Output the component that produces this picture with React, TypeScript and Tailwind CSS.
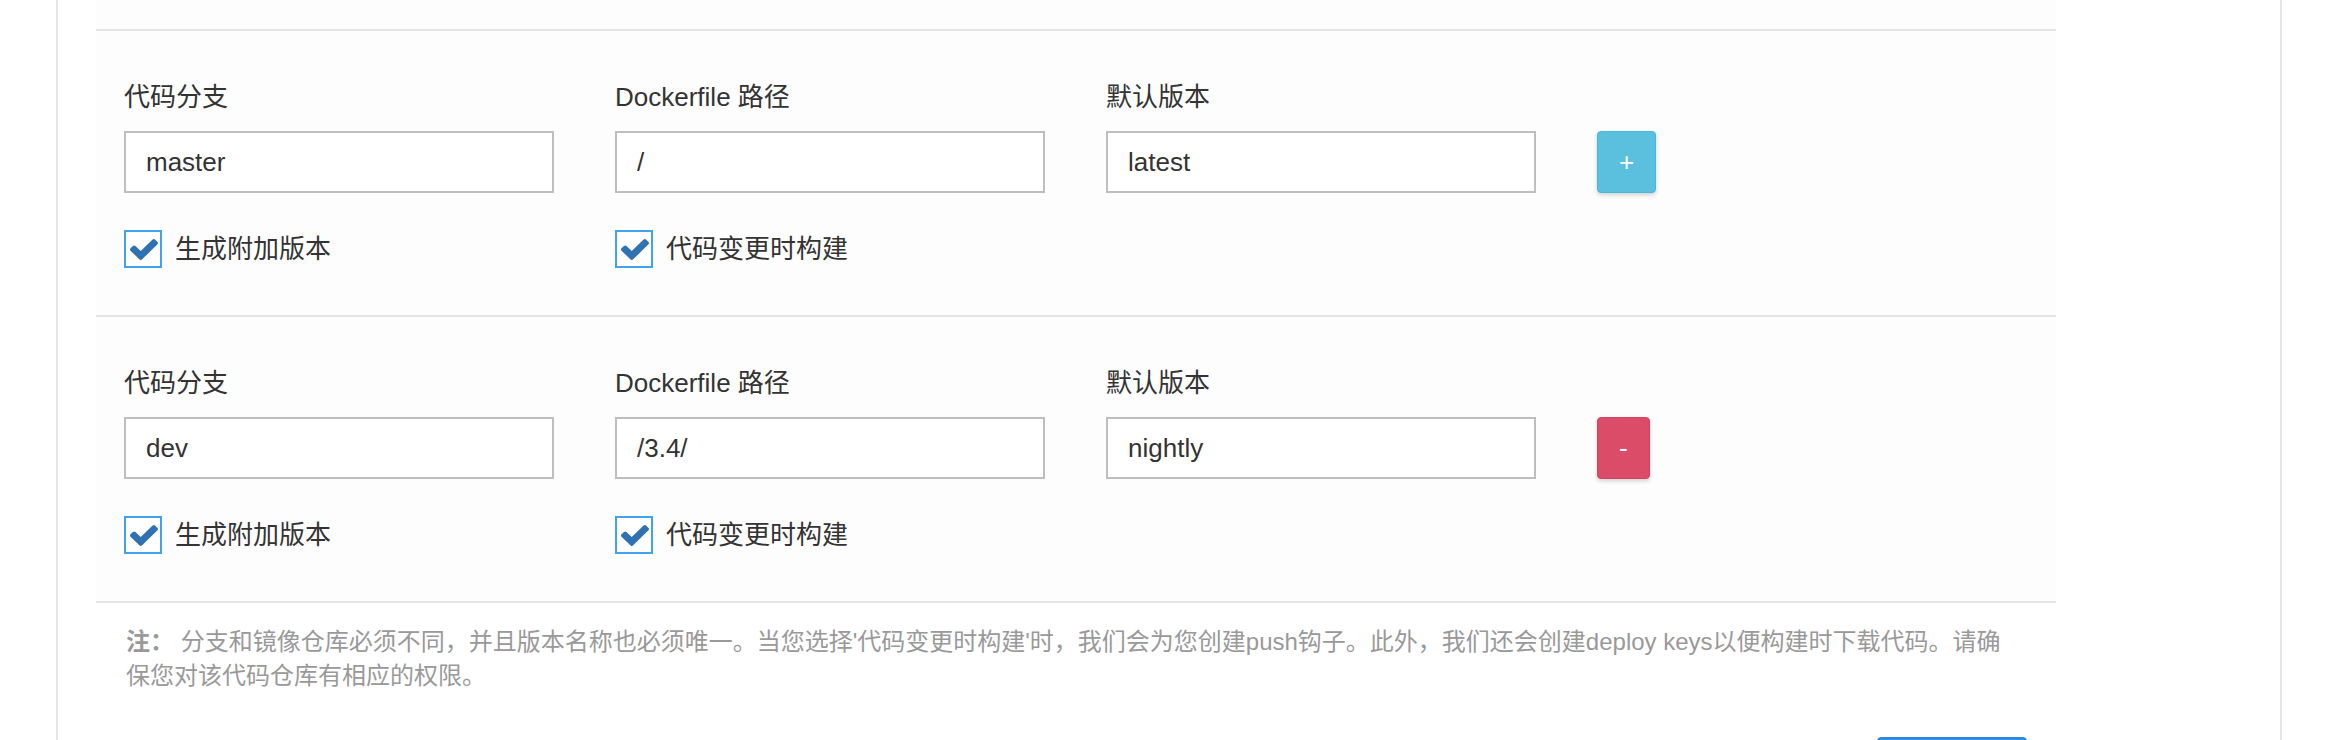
import { useState } from "react";

type Row = {
  branch: string;
  path: string;
  tag: string;
  extraTags: boolean;
  autoBuild: boolean;
  kind: "add" | "remove";
};

const initialRows: Row[] = [
  { branch: "master", path: "/", tag: "latest", extraTags: true, autoBuild: true, kind: "add" },
  { branch: "dev", path: "/3.4/", tag: "nightly", extraTags: true, autoBuild: true, kind: "remove" },
];

function CheckMark() {
  return (
    <svg width="28" height="21" viewBox="121 334 1550 1188" preserveAspectRatio="none" className="block">
      <path
        fill="#2f71b1"
        d="M1671 566q0 40-28 68l-724 724-136 136q-28 28-68 28t-68-28l-136-136-362-362q-28-28-28-68t28-68l136-136q28-28 68-28t68 28l294 295 656-657q28-28 68-28t68 28l136 136q28 28 28 68z"
      />
    </svg>
  );
}

function Checkbox({ checked, label, onToggle }: { checked: boolean; label: string; onToggle: () => void }) {
  return (
    <label className="flex items-center gap-[13px] cursor-pointer select-none" onClick={onToggle}>
      <span className="w-[38px] h-[38px] border-2 border-[#41a2ef] bg-white flex items-center justify-center pl-[2px]">
        {checked && <CheckMark />}
      </span>
      <span className="text-[26px] leading-[36px] text-[#333]">{label}</span>
    </label>
  );
}

function Field({ label, value, onChange }: { label: string; value: string; onChange: (v: string) => void }) {
  return (
    <div className="w-[430px] flex flex-col">
      <label className="text-[26px] leading-[36px] text-[#333]">{label}</label>
      <input
        value={value}
        onChange={(e) => onChange(e.target.value)}
        className="mt-[16px] h-[62px] w-full border-2 border-[#bebebe] bg-white px-[20px] text-[26px] text-[#333] outline-none"
      />
    </div>
  );
}

export default function App() {
  const [rows, setRows] = useState<Row[]>(initialRows);

  const update = (i: number, patch: Partial<Row>) => {
    setRows((prev) => prev.map((r, idx) => (idx === i ? { ...r, ...patch } : r)));
  };

  return (
    <div
      className="w-[2350px] h-[740px] overflow-hidden bg-white"
      style={{ fontFamily: '"Liberation Sans", "Noto Sans CJK SC", sans-serif' }}
    >
      <div className="ml-[56px] w-[2226px] h-full border-x-2 border-[#e6e6e6] pl-[38px]">
        <div className="w-[1960px] bg-[#fdfdfd] pt-[29px] border-b-2 border-[#e4e4e4]">
          {rows.map((row, i) => (
            <div key={i} className="border-t-2 border-[#e4e4e4] pl-[28px] pt-[48px] pb-[47px]">
              <div className="flex items-end gap-[61px]">
                <Field label="代码分支" value={row.branch} onChange={(v) => update(i, { branch: v })} />
                <Field label="Dockerfile 路径" value={row.path} onChange={(v) => update(i, { path: v })} />
                <Field label="默认版本" value={row.tag} onChange={(v) => update(i, { tag: v })} />
                {row.kind === "add" ? (
                  <button className="h-[62px] px-[21px] rounded-[4px] border border-[#46b8da] bg-[#5bc0de] text-white text-[26px] shadow-[0_2px_4px_rgba(0,0,0,0.18)]">
                    +
                  </button>
                ) : (
                  <button className="h-[62px] px-[21px] rounded-[4px] border border-[#d2445f] bg-[#db4c69] text-white text-[26px] shadow-[0_2px_4px_rgba(0,0,0,0.18)]">
                    -
                  </button>
                )}
              </div>
              <div className="flex gap-[61px] mt-[37px]">
                <div className="w-[430px]">
                  <Checkbox
                    checked={row.extraTags}
                    label="生成附加版本"
                    onToggle={() => update(i, { extraTags: !row.extraTags })}
                  />
                </div>
                <div className="w-[430px]">
                  <Checkbox
                    checked={row.autoBuild}
                    label="代码变更时构建"
                    onToggle={() => update(i, { autoBuild: !row.autoBuild })}
                  />
                </div>
              </div>
            </div>
          ))}
        </div>

        <p className="w-[1960px] pl-[30px] pt-[22px] text-[24px] leading-[34px] text-[#999] whitespace-nowrap">
          <span className="font-bold">注：</span>&nbsp;分支和镜像仓库必须不同，并且版本名称也必须唯一。当您选择'代码变更时构建'时，我们会为您创建push钩子。此外，我们还会创建deploy keys以便构建时下载代码。请确
          <br />
          保您对该代码仓库有相应的权限。
        </p>

        <div className="w-[1960px] flex justify-end pr-[29px] mt-[44px]">
          <button aria-label="保存" className="w-[150px] h-[62px] rounded-[4px] border border-[#2a84d6] bg-[#2f8de0]" />
        </div>
      </div>
    </div>
  );
}
